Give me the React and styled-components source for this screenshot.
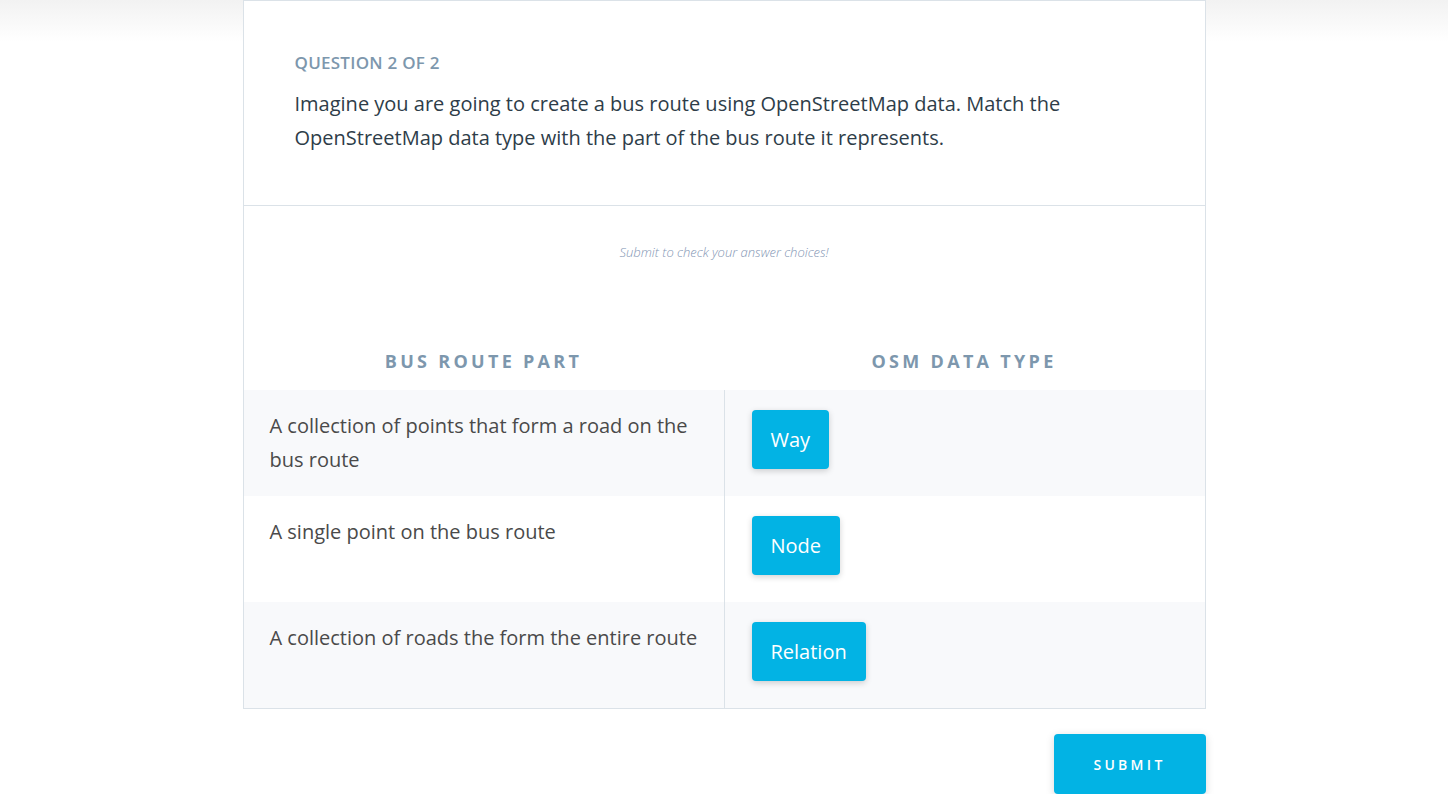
import React from 'react';
import styled, { createGlobalStyle } from 'styled-components';

const GlobalStyle = createGlobalStyle`
  html, body {
    margin: 0;
    padding: 0;
  }
  body {
    font-family: "Open Sans", "Noto Sans", sans-serif;
    background: linear-gradient(#f2f2f2 0, #ffffff 42px) no-repeat #fff;
    min-height: 794px;
  }
`;

const Page = styled.div`
  width: 963px;
  margin: 0 auto;
  display: flex;
  flex-direction: column;
  align-items: flex-end;
`;

const Card = styled.section`
  width: 100%;
  box-sizing: border-box;
  background: #fff;
  border: 1px solid #dbe2e8;
`;

const Header = styled.header`
  padding: 49px 51px 50px;
  border-bottom: 1px solid #dbe2e8;
`;

const Eyebrow = styled.h2`
  margin: 0 0 11px;
  font-size: 17px;
  line-height: 26px;
  font-weight: 600;
  letter-spacing: 0.25px;
  color: #7d97ad;
  text-transform: uppercase;
`;

const Prompt = styled.p`
  margin: 0;
  font-size: 20px;
  line-height: 34px;
  color: #2e3d49;
  max-width: 780px;
`;

const Hint = styled.p`
  margin: 0;
  padding: 37px 0 88px;
  text-align: center;
  font-size: 13px;
  line-height: 18px;
  font-style: italic;
  font-weight: 300;
  color: #8496b4;
`;

const Table = styled.div`
  display: grid;
  grid-template-columns: 480px 1fr;
`;

const ColumnTitle = styled.div`
  text-align: center;
  font-size: 18px;
  font-weight: 700;
  letter-spacing: 3.3px;
  color: #7d97ad;
  text-transform: uppercase;
  line-height: 24px;
  padding: 0 0 17px;
`;

const Cell = styled.div`
  min-height: 106px;
  box-sizing: border-box;
  background: ${(p) => (p.shaded ? '#f8f9fb' : '#fff')};
  padding: ${(p) => (p.right ? '20px 27px' : '19px 26px')};
  border-left: ${(p) => (p.right ? '1px solid #dbe2e8' : 'none')};
  font-size: 20px;
  line-height: 34px;
  color: #4a4a4a;
  & > p {
    margin: 0;
  }
`;

const Chip = styled.button`
  font-family: inherit;
  font-size: 20px;
  line-height: 27px;
  color: #fff;
  background: #02b3e4;
  border: none;
  border-radius: 4px;
  padding: 16px 19px;
  box-shadow: 0 2px 6px rgba(0, 0, 0, 0.18);
  cursor: grab;
`;

const Submit = styled.button`
  margin-top: 25px;
  width: 152px;
  height: 60px;
  font-family: inherit;
  font-size: 14px;
  font-weight: 600;
  letter-spacing: 3.3px;
  color: #fff;
  background: #02b3e4;
  border: none;
  border-radius: 4px;
  box-shadow: 0 2px 8px rgba(0, 0, 0, 0.15);
  text-transform: uppercase;
  cursor: pointer;
`;

const rows = [
  { part: 'A collection of points that form a road on the bus route', type: 'Way' },
  { part: 'A single point on the bus route', type: 'Node' },
  { part: 'A collection of roads the form the entire route', type: 'Relation' },
];

export default function App() {
  return (
    <>
      <GlobalStyle />
      <Page>
        <Card>
          <Header>
            <Eyebrow>Question 2 of 2</Eyebrow>
            <Prompt>
              Imagine you are going to create a bus route using OpenStreetMap data. Match the
              OpenStreetMap data type with the part of the bus route it represents.
            </Prompt>
          </Header>
          <Hint>Submit to check your answer choices!</Hint>
          <Table>
            <ColumnTitle>Bus Route Part</ColumnTitle>
            <ColumnTitle>OSM Data Type</ColumnTitle>
            {rows.map((row, i) => (
              <React.Fragment key={row.type}>
                <Cell shaded={i % 2 === 0}>
                  <p>{row.part}</p>
                </Cell>
                <Cell shaded={i % 2 === 0} right>
                  <Chip>{row.type}</Chip>
                </Cell>
              </React.Fragment>
            ))}
          </Table>
        </Card>
        <Submit>Submit</Submit>
      </Page>
    </>
  );
}
